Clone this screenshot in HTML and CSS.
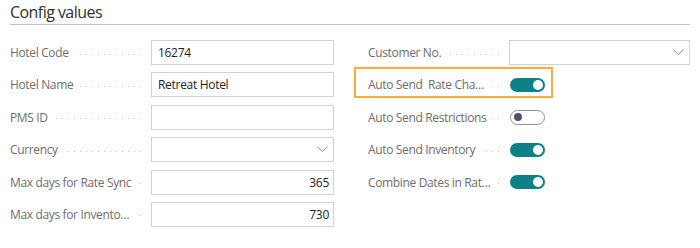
FILE: index.html
```html
<!DOCTYPE html>
<html>
<head>
<meta charset="utf-8">
<link rel="stylesheet" href="styles.css">
</head>
<body>
<section class="group">
  <h2 class="title">Config values</h2>
  <div class="cols">
    <div class="col col-left">
      <div class="field">
        <div class="cap"><span class="label">Hotel Code</span><span class="dots"></span></div>
        <div class="box"><span class="val">16274</span></div>
      </div>
      <div class="field">
        <div class="cap"><span class="label">Hotel Name</span><span class="dots"></span></div>
        <div class="box"><span class="val">Retreat Hotel</span></div>
      </div>
      <div class="field">
        <div class="cap"><span class="label">PMS ID</span><span class="dots"></span></div>
        <div class="box"></div>
      </div>
      <div class="field">
        <div class="cap"><span class="label">Currency</span><span class="dots"></span></div>
        <div class="box select">
          <svg class="chev" width="11" height="7" viewBox="0 0 11 7"><path d="M0.5 0.8 L5.5 5.6 L10.5 0.8" fill="none" stroke="#8a8a8a" stroke-width="1"/></svg>
        </div>
      </div>
      <div class="field">
        <div class="cap"><span class="label">Max days for Rate Sync</span><span class="dots"></span></div>
        <div class="box num"><span class="val">365</span></div>
      </div>
      <div class="field">
        <div class="cap"><span class="label">Max days for Invento…</span><span class="dots"></span></div>
        <div class="box num"><span class="val">730</span></div>
      </div>
    </div>
    <div class="col col-right">
      <div class="field">
        <div class="cap"><span class="label">Customer No.</span><span class="dots"></span></div>
        <div class="box select">
          <svg class="chev" width="11" height="7" viewBox="0 0 11 7"><path d="M0.5 0.8 L5.5 5.6 L10.5 0.8" fill="none" stroke="#8a8a8a" stroke-width="1"/></svg>
        </div>
      </div>
      <div class="field focused">
        <div class="cap"><span class="label">Auto Send&nbsp; Rate Cha…</span><span class="dots"></span></div>
        <div class="ctl"><span class="toggle on"><span class="knob"></span></span></div>
      </div>
      <div class="field">
        <div class="cap"><span class="label">Auto Send Restrictions</span><span class="dots"></span></div>
        <div class="ctl"><span class="toggle off"><span class="knob"></span></span></div>
      </div>
      <div class="field">
        <div class="cap"><span class="label">Auto Send Inventory</span><span class="dots"></span></div>
        <div class="ctl"><span class="toggle on"><span class="knob"></span></span></div>
      </div>
      <div class="field">
        <div class="cap"><span class="label">Combine Dates in Rat…</span><span class="dots"></span></div>
        <div class="ctl"><span class="toggle on"><span class="knob"></span></span></div>
      </div>
    </div>
  </div>
</section>
</body>
</html>
```

FILE: styles.css
```css
html, body {
  margin: 0;
  padding: 0;
  background: #ffffff;
}

body {
  font-family: "Open Sans", "Noto Sans", "Liberation Sans", sans-serif;
  font-size: 12px;
  color: #212121;
}

.group {
  padding: 0 10px;
  width: 680px;
}

.title {
  margin: 0;
  font-size: 16px;
  font-weight: 400;
  color: #303030;
  line-height: 20px;
  padding-top: 2px;
  height: 22px;
  border-bottom: 1px solid #b7c1cc;
  letter-spacing: -0.55px;
}

.cols {
  display: grid;
  grid-template-columns: 324px 322px;
  column-gap: 34px;
  padding-top: 15px;
}

.col {
  display: flex;
  flex-direction: column;
  gap: 7.4px;
}

.field {
  display: grid;
  grid-template-columns: 141px 1fr;
  align-items: center;
  height: 25px;
  position: relative;
}

.cap {
  display: flex;
  align-items: center;
  min-width: 0;
  padding-right: 10px;
}

.label {
  color: #6d6d6d;
  white-space: nowrap;
  flex: none;
  letter-spacing: -0.35px;
}

.dots {
  flex: 1;
  min-width: 0;
  height: 1px;
  margin: 3px 0 0 6px;
  background-image: repeating-linear-gradient(to left, #c4c4c4 0 1px, transparent 1px 6px);
}

.box {
  height: 25px;
  box-sizing: border-box;
  border: 1px solid #d2d2d2;
  display: flex;
  align-items: center;
  padding: 0 6px;
  color: #222;
  letter-spacing: -0.3px;
}

.box.num {
  justify-content: flex-end;
  padding-right: 4px;
}

.box.select {
  justify-content: flex-end;
  padding-right: 5px;
}

.chev {
  display: block;
}

.ctl {
  display: flex;
  align-items: center;
  padding-left: 1px;
}

.toggle {
  width: 35px;
  height: 14px;
  border-radius: 8px;
  box-sizing: border-box;
  display: flex;
  align-items: center;
}

.toggle.on {
  background: #0e8088;
  justify-content: flex-end;
  padding-right: 2px;
}

.toggle.on .knob {
  width: 10px;
  height: 10px;
  border-radius: 50%;
  background: #ffffff;
}

.toggle.off {
  height: 15px;
  background: #ffffff;
  border: 1px solid #8f8f8f;
  padding-left: 2.5px;
}

.toggle.off .knob {
  width: 8px;
  height: 8px;
  border-radius: 50%;
  background: #4b5567;
}

.focused::before {
  content: "";
  position: absolute;
  left: -14px;
  top: -5px;
  width: 199px;
  height: 31px;
  box-sizing: border-box;
  border: 2px solid #f2b13a;
  box-shadow: 0 0 2px rgba(242, 177, 58, 0.35);
  pointer-events: none;
}
```
